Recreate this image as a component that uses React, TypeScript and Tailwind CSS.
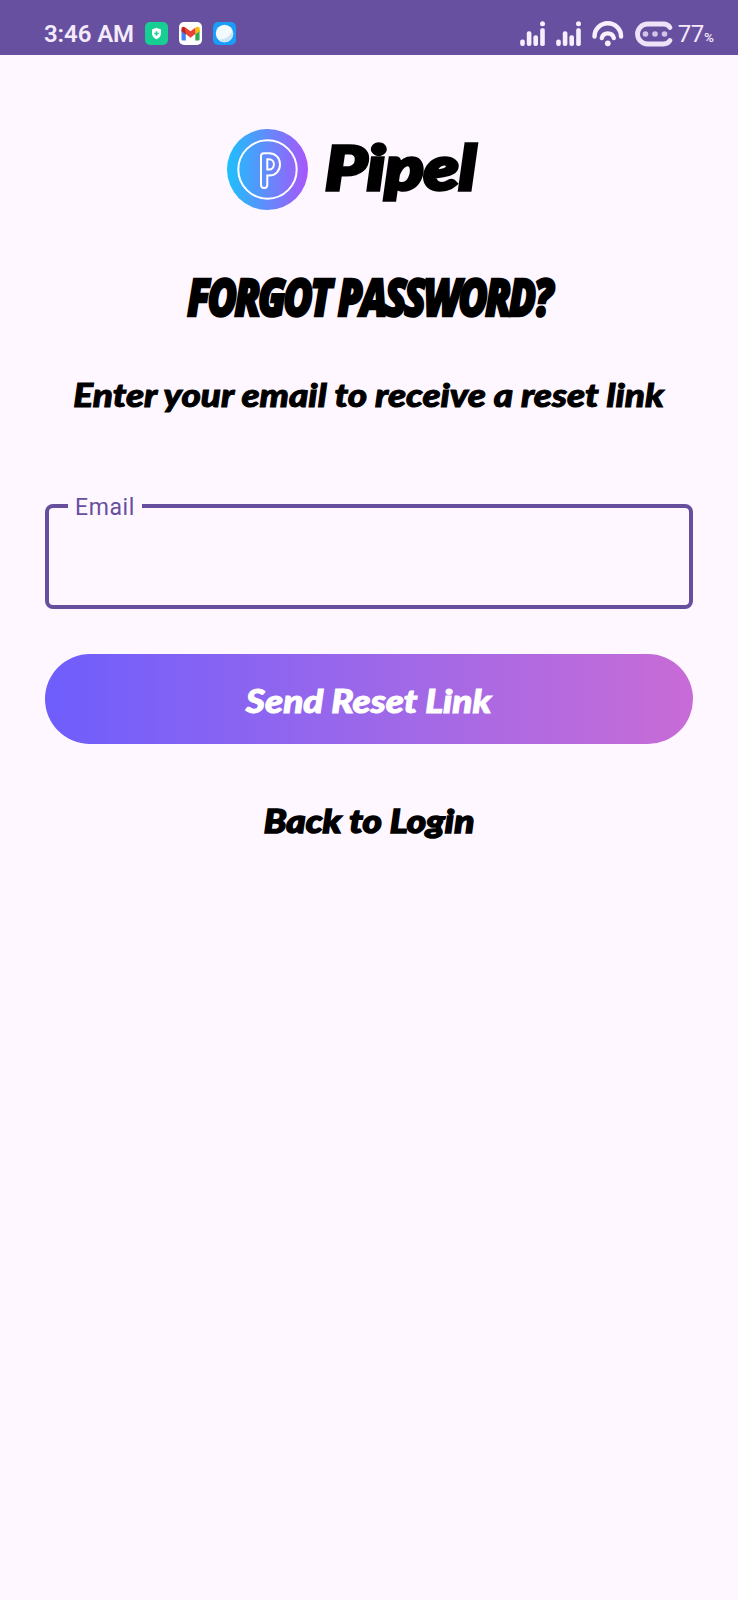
import type { ReactNode } from "react";

const script = "font-['Lato','Liberation_Sans',sans-serif] font-black italic whitespace-nowrap leading-none";

function ShieldIcon() {
  return (
    <svg className="ml-3 h-[23px] w-[23px]" viewBox="0 0 23 23">
      <rect width="23" height="23" rx="5" fill="#17cf93" />
      <path d="M11.5 5.8 16 7.4v4.2c0 2.700-1.900 4.600-4.500 5.700C8.900 16.200 7 14.300 7 11.600V7.400z" fill="#fff" />
      <path d="M11.500 9.300v4.400M9.300 11.500h4.400" stroke="#17cf93" strokeWidth="1.500" />
    </svg>
  );
}

function MailIcon() {
  return (
    <svg className="ml-[11px] h-[23px] w-[23px]" viewBox="0 0 23 23">
      <rect width="23" height="23" rx="5" fill="#fff" />
      <path d="M2.500 8v9.200c0 .8.600 1.300 1.300 1.300h3V9.500z" fill="#4285f4" />
      <path d="M16.300 9.500v9h3c.8 0 1.300-.5 1.300-1.300V8z" fill="#34a853" />
      <path d="M16.300 5.800 18 4.900c1.200-.6 2.700.2 2.700 1.700v2.600l-4.400 3.300z" fill="#fbbc04" />
      <path d="M6.800 5.800 11.500 9.300l4.800-3.500v6.300l-4.800 3.600-4.700-3.600z" fill="#ea4335" />
      <path d="M2.500 6.600c0-1.500 1.500-2.300 2.700-1.700l1.600.9v6.700L2.500 9.200z" fill="#c5221f" />
    </svg>
  );
}

function BallIcon() {
  return (
    <svg className="ml-[11px] h-[23px] w-[23px]" viewBox="0 0 23 23">
      <rect width="23" height="23" rx="5" fill="#1a9df8" />
      <circle cx="11.500" cy="11.500" r="8.700" fill="#f3fafe" />
      <path d="M19.800 8.800A8.700 8.700 0 0 1 5 17.300C12 18 17.500 14 19.800 8.800z" fill="#c9e5f7" />
    </svg>
  );
}

function Signal() {
  return (
    <svg className="h-[26px] w-[26px]" viewBox="0 0 26 26" fill="#f7effc">
      <rect x="0.200" y="18.500" width="4.600" height="6.500" rx="2" />
      <rect x="6.800" y="10.300" width="4.600" height="14.700" rx="2" />
      <rect x="13.400" y="14.300" width="4.600" height="10.700" rx="2" />
      <rect x="20.200" y="7.200" width="4.600" height="17.800" rx="1.800" />
      <circle cx="22.500" cy="2.800" r="2.500" />
    </svg>
  );
}

function Wifi() {
  return (
    <svg className="ml-[10px] h-[26px] w-[32px]" viewBox="0 0 32 26" fill="none" stroke="#f7effc" strokeWidth="4.400" strokeLinecap="round">
      <path d="M2.500 15.500a13.300 13.300 0 0 1 26.600 0" />
      <path d="M9.800 17a6.200 6.200 0 0 1 12 0" />
      <circle cx="15.800" cy="22.300" r="2.900" fill="#f7effc" stroke="none" />
    </svg>
  );
}

function Battery() {
  return (
    <svg className="ml-[11px] h-[26px] w-[39px]" viewBox="0 0 39 26">
      <path d="M35 6.500C33.500 4.200 31.500 3 28.500 3h-16a10 10 0 0 0 0 20h16c3 0 5-1.200 6.500-3.500" fill="none" stroke="#eee2f8" strokeWidth="4.800" strokeLinecap="round" />
      <g fill="#d3c3e8">
        <circle cx="10.500" cy="13" r="2.800" />
        <circle cx="20" cy="13" r="2.800" />
        <circle cx="29.500" cy="13" r="2.800" />
      </g>
    </svg>
  );
}

function StatusBar() {
  return (
    <header className="flex h-[55px] items-start bg-[#6750a0] pr-6 pl-11 font-['Roboto',sans-serif] text-[#f3eafa]">
      <div className="flex h-[67px] items-center">
        <span className="w-[89px] text-[24px] leading-none font-semibold tracking-[-0.1px] whitespace-nowrap">3:46 AM</span>
        <ShieldIcon />
        <MailIcon />
        <BallIcon />
      </div>
      <div className="ml-auto flex h-[67px] items-center">
        <Signal />
        <span className="w-[10px]" />
        <Signal />
        <Wifi />
        <Battery />
        <span className="ml-[4px] flex items-baseline leading-none">
          <span className="text-[24px] tracking-[-0.3px]">77</span>
          <span className="text-[13.500px] font-medium">%</span>
        </span>
      </div>
    </header>
  );
}

function Logo() {
  return (
    <svg className="h-[81px] w-[81px] shrink-0" viewBox="0 0 81 81">
      <defs>
        <linearGradient id="disc" x1="0" y1="0" x2="1" y2="0">
          <stop offset="0" stopColor="#1dc0fc" />
          <stop offset="1" stopColor="#a855fb" />
        </linearGradient>
      </defs>
      <circle cx="40.500" cy="40.500" r="40.500" fill="url(#disc)" />
      <g fill="none" stroke="#fff" strokeWidth="2">
        <circle cx="40.500" cy="40.500" r="29.200" />
        <path d="M34 27c0-1.800 1-2.800 2.800-2.800h5.200c6.500 0 11 4.700 11 11.100s-4.300 11.300-10.800 11.300h-1.900v9.200c0 2-1.200 3.200-3.100 3.200S34 57.800 34 55.800z" />
        <path d="M40.300 30.300h1.700c2.800 0 4.900 2.100 4.900 5s-2 5.200-4.900 5.200h-1.700z" />
      </g>
    </svg>
  );
}

function Line({ className, children }: { className: string; children: ReactNode }) {
  return <div className={`flex items-center justify-center ${className}`}>{children}</div>;
}

export default function App() {
  return (
    <div className="min-h-[1600px] w-[738px] overflow-hidden bg-[#fef7ff] text-black">
      <StatusBar />
      <main className="flex flex-col px-[45px] pt-[74px]">
        <div className="flex h-[81px] items-center pl-[182px]">
          <Logo />
          <span className={`${script} mb-[7px] ml-[17px] origin-left scale-x-[1.17] text-[61px] [-webkit-text-stroke:3.500px_black]`}>Pipel</span>
        </div>
        <Line className="mt-[56px] h-[60px]">
          <h1 className="origin-center scale-x-[0.77] font-['Open_Sans','Liberation_Sans',sans-serif] text-[52px] leading-none font-extrabold tracking-[-3.300px] whitespace-nowrap italic [-webkit-text-stroke:2.500px_black]">FORGOT PASSWORD?</h1>
        </Line>
        <Line className="mt-[48px] h-[40px]">
          <p className={`${script} scale-x-[1.12] text-[33px] [-webkit-text-stroke:1px_black]`}>Enter your email to receive a reset link</p>
        </Line>
        <label className="relative mt-[90px] block h-[105px] rounded-[8px] border-4 border-[#674f9e]">
          <span className="absolute -top-[15px] left-[19px] flex h-7 w-[74px] items-center justify-center bg-[#fef7ff] font-['Roboto',sans-serif] text-[23px] leading-none tracking-[0.600px] text-[#674f9e]">Email</span>
          <input type="email" className="h-full w-full bg-transparent px-6 text-2xl outline-none" />
        </label>
        <button className="mt-[45px] flex h-[90px] items-center justify-center rounded-full bg-linear-to-r from-[#6e5dfc] to-[#c86bd6] text-white">
          <span className={`${script} mt-[2px] scale-x-[1.12] text-[33px] [-webkit-text-stroke:1px_white]`}>Send Reset Link</span>
        </button>
        <Line className="mt-[56px] h-[40px]">
          <a className={`${script} scale-x-[1.12] text-[33px] [-webkit-text-stroke:1.500px_black]`}>Back to Login</a>
        </Line>
      </main>
    </div>
  );
}
